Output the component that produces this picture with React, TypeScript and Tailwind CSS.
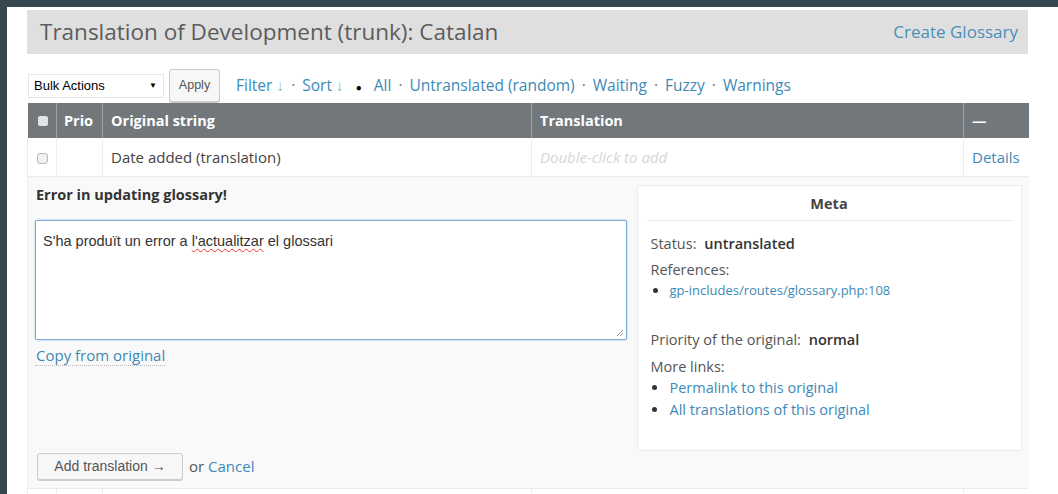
import React from "react";

const sans = "font-['Open_Sans',_'Liberation_Sans',_sans-serif]";
const arial = "font-['Liberation_Sans',_Arial,_sans-serif]";

function Sep() {
  return <span className="mx-[7px] text-[#777]">·</span>;
}

function Box({ dark }: { dark?: boolean }) {
  return dark ? (
    <span className="inline-block h-[10px] w-[10px] rounded-[2px] bg-[#e3e3e3]" />
  ) : (
    <span className="inline-block h-[11px] w-[11px] rounded-[3px] border border-[#b4b9be] bg-[#f1f1f1]" />
  );
}

export default function App() {
  return (
    <div className={`min-h-[494px] border-l-[7px] border-t-[7px] border-[#37474f] bg-white ${sans}`}>
      <div className="w-[1021px] pl-[20px] pt-[3px]">
        {/* page title bar */}
        <div className="flex h-[44px] items-center justify-between bg-[#dfdfdf] pl-[13px] pr-[10px]">
          <h2 className="text-[22.5px] text-[#5c5c5c]">Translation of Development (trunk): Catalan</h2>
          <a className="text-[17px] text-[#4a8fb8]">Create Glossary</a>
        </div>

        {/* bulk actions + filters */}
        <div className="mt-[15px] flex h-[33px] items-center pl-[1px]">
          <div className={`flex h-[24px] w-[136px] items-center justify-between border border-[#e6e6e6] bg-white pl-[5px] pr-[6px] text-[13px] text-black ${arial}`}>
            <span>Bulk Actions</span>
            <span className="text-[8px]">▼</span>
          </div>
          <button className={`ml-[5px] h-[33px] w-[51px] rounded-[3px] border border-[#ccc] bg-[#f7f7f7] text-[12.5px] text-[#555] shadow-[0_1px_0_#ccc] ${arial}`}>
            Apply
          </button>
          <div className="ml-[16px] text-[15.5px] text-[#3d89b8]">
            <a>Filter <span className="text-[#8fb9d3]">↓</span></a>
            <Sep />
            <a>Sort <span className="text-[#8fb9d3]">↓</span></a>
            <span className="mx-[12px] text-[10px] text-black">●</span>
            <a>All</a>
            <Sep />
            <a>Untranslated (random)</a>
            <Sep />
            <a>Waiting</a>
            <Sep />
            <a>Fuzzy</a>
            <Sep />
            <a>Warnings</a>
          </div>
        </div>

        <table className="mt-[1px] w-[1001px] table-fixed border-collapse text-[15px]">
          <colgroup>
            <col className="w-[29px]" />
            <col className="w-[46px]" />
            <col className="w-[429px]" />
            <col className="w-[432px]" />
            <col className="w-[65px]" />
          </colgroup>
          <thead>
            <tr className="h-[35px] bg-[#72777c] text-left text-[14.5px] font-bold text-white">
              <th className="pl-[10px] pt-[1px]"><Box dark /></th>
              <th className="border-l border-[#9ea2a6] pl-[7px]">Prio</th>
              <th className="border-l border-[#9ea2a6] pl-[8px]">Original string</th>
              <th className="border-l border-[#9ea2a6] pl-[8px]">Translation</th>
              <th className="border-l border-[#9ea2a6] pl-[8px]">—</th>
            </tr>
          </thead>
          <tbody>
            <tr className="h-[38px] border-b border-[#ececec] text-[#444]">
              <td className="border-l border-[#ececec] pl-[9px] pt-[2px]"><Box /></td>
              <td className="border-l border-[#ececec]" />
              <td className="border-l border-[#ececec] pl-[8px]">Date added (translation)</td>
              <td className="border-l border-[#ececec] pl-[8px] italic text-[#d6d6d6]">Double-click to add</td>
              <td className="border-l border-[#ececec] pl-[8px] text-[#3d89b8]">Details</td>
            </tr>

            {/* inline editor */}
            <tr className="border-b border-[#ececec] bg-[#f9f9f9]">
              <td colSpan={5} className="border-l border-[#ececec] px-[7px] pb-[8px] pt-[8px] align-top">
                <div className="flex justify-between">
                  <div className="w-[592px]">
                    <p className="h-[20px] pl-[1px] text-[14.5px] font-bold leading-[20px] text-[#333]">
                      Error in updating glossary!
                    </p>
                    <div className={`relative mt-[15px] h-[120px] rounded-[2px] border border-[#7ea9dc] bg-white px-[7px] py-[10px] text-[14.5px] text-[#333] shadow-[0_0_2px_rgba(30,140,190,0.5)] ${arial}`}>
                      S'ha produït un error a{" "}
                      <span className="underline decoration-[#e33] decoration-wavy decoration-[1px] underline-offset-[2px]">l'actualitzar</span>{" "}
                      el glossari
                      <svg className="absolute bottom-[2px] right-[2px]" width="9" height="9" viewBox="0 0 9 9">
                        <path d="M8 2 L2 8 M8 5 L5 8" stroke="#999" strokeWidth="1" />
                      </svg>
                    </div>
                    <a className="mt-[5px] inline-block border-b border-dotted border-[#bbb] pl-[1px] text-[15px] leading-[20px] text-[#3d89b8]">
                      Copy from original
                    </a>
                  </div>

                  <div className="h-[266px] w-[385px] border border-[#ececec] bg-white px-[9px]">
                    <h3 className="mt-[8px] border-b border-[#eaeaea] pb-[6px] text-center text-[14.5px] font-bold leading-[20px] text-[#444]">
                      Meta
                    </h3>
                    <div className="pl-[4px] text-[14.5px] text-[#555]">
                      <p className="mt-[13px] leading-[20px]">
                        Status: <b className="ml-[4px] font-semibold text-[#333]">untranslated</b>
                      </p>
                      <p className="mt-[6px] leading-[20px]">References:</p>
                      <ul className="ml-[18px] list-disc text-[13px] leading-[20px] marker:text-[#333]">
                        <li className="pl-[1px] text-[#3d89b8]">gp-includes/routes/glossary.php:108</li>
                      </ul>
                      <p className="mt-[30px] leading-[20px]">
                        Priority of the original: <b className="ml-[4px] font-semibold text-[#333]">normal</b>
                      </p>
                      <p className="mt-[7px] leading-[20px]">More links:</p>
                      <ul className="ml-[18px] list-disc leading-[22px] marker:text-[#333]">
                        <li className="pl-[1px] text-[#3d89b8]">Permalink to this original</li>
                        <li className="pl-[1px] text-[#3d89b8]">All translations of this original</li>
                      </ul>
                    </div>
                  </div>
                </div>

                <div className="mt-[2px] flex items-center pl-[2px]">
                  <button className={`h-[27px] w-[146px] rounded-[3px] border border-[#ccc] bg-[#f7f7f7] text-[14px] text-[#555] shadow-[0_1px_0_#ccc] ${arial}`}>
                    Add translation →
                  </button>
                  <span className="ml-[6px] text-[15px] text-[#555]">
                    or <a className="text-[#3d89b8]">Cancel</a>
                  </span>
                </div>
              </td>
            </tr>

            <tr className="h-[20px]">
              <td className="border-l border-[#ececec]" />
              <td className="border-l border-[#ececec]" />
              <td className="border-l border-[#ececec]" />
              <td className="border-l border-[#ececec]" />
              <td className="border-l border-[#ececec]" />
            </tr>
          </tbody>
        </table>
      </div>
    </div>
  );
}
